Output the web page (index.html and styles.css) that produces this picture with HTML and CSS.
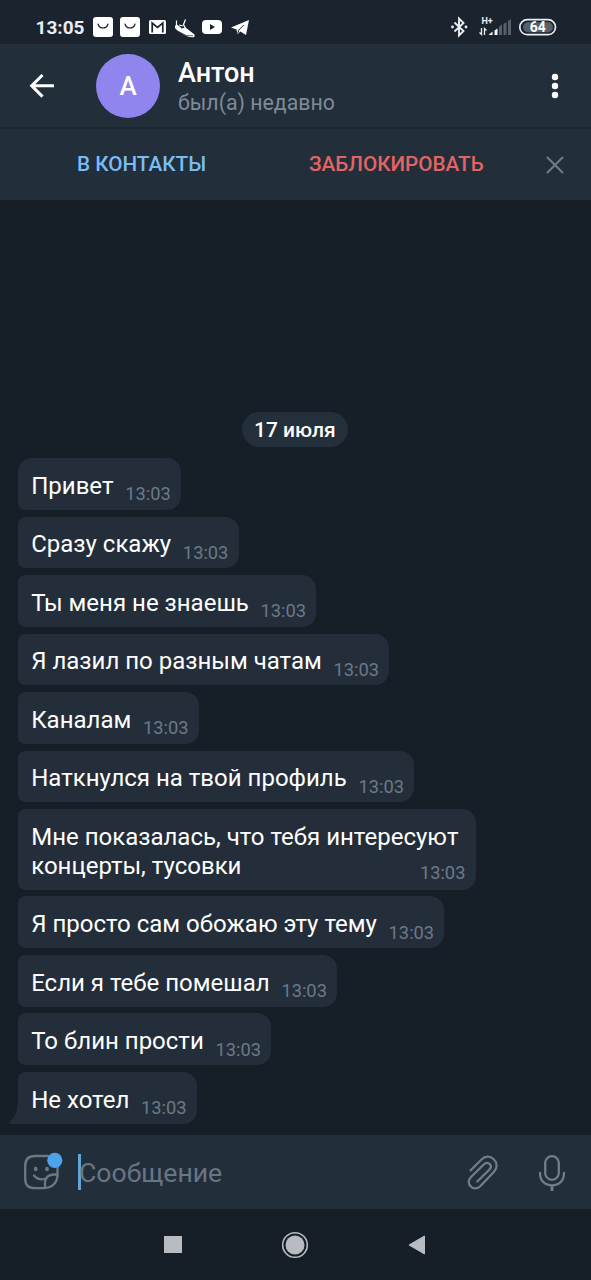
FILE: index.html
```html
<!DOCTYPE html>
<html lang="ru">
<head>
<meta charset="utf-8">
<title>Антон</title>
<link rel="stylesheet" href="styles.css">
</head>
<body>
<div class="phone">
  <div class="status">
    <span class="clock">13:05</span>
    <svg class="notifications" width="160" height="24" viewBox="0 0 160 24">
      <g fill="#fff">
        <rect x="1" y="2" width="20" height="20" rx="3"/>
        <rect x="28" y="2" width="20" height="20" rx="3"/>
        <rect x="57" y="5" width="17" height="14" rx="1.5"/>
        <path d="M83 10.500l2.500-.5 4 3.500 4-1 9 7v2.500q-4 .8-8-1l-9-5-2.500-3z"/>
        <rect x="110" y="5" width="20" height="14" rx="4"/>
        <path d="M139 12.500L157 5L154 20L148.500 16.500L145.500 19L144.500 14.500z"/>
      </g>
      <g fill="none" stroke="#1b242e" stroke-width="1.2">
        <path d="M6 9q1 4 5 4t5-4M33 9q1 4 5 4t5-4" stroke-linecap="round"/>
        <path d="M60.200 17.500V8l5.300 4.500L70.800 8v9.500" stroke-width="1.700"/>
        <path d="M84 15l10 5.500 7 .3" stroke-width=".7"/>
        <path d="M145.800 18l1-3 5-5" stroke-width="1"/>
      </g>
      <path d="M84.500 5.500v5l4 2.500M93.500 4.500l-2 5 2 4M87 10l4 1" fill="none" stroke="#fff" stroke-width="1.200"/>
      <path d="M118 9l5 3-5 3z" fill="#1b242e"/>
    </svg>
    <svg class="signals" width="108" height="24" viewBox="0 0 108 24">
      <path d="M4.500 7.500l9 8.500-4.500 4.500V3.500l4.500 4.500-9 8.500" fill="none" stroke="#e9edf1" stroke-width="1.900"/>
      <circle cx="2.500" cy="12" r="1.400" fill="#e9edf1"/>
      <circle cx="16" cy="12" r="1.400" fill="#e9edf1"/>
      <text class="net" x="31.500" y="9">H+</text>
      <path d="M31.500 13v6.500l-2-2M34.500 20v-6.500l2 2" fill="none" stroke="#e9edf1" stroke-width="1.300"/>
      <path d="M38.500 20l4-3.500v3.500z M44.500 15.500l3-2v6.500h-3z" fill="#fff"/>
      <path d="M49 11.500l3-2v10.500h-3z M53.500 9l3-2v13h-3z M58 6l3-2v16h-3z" fill="#56606a"/>
      <rect x="69.800" y="4.700" width="35.700" height="15" rx="7.500" fill="none" stroke="#e9edf1" stroke-width="1.700"/>
      <path d="M78 7.200h20a5 5 0 010 10H78a5 5 0 010-10z" fill="#56606a"/>
      <text class="battery" x="87.700" y="17">64</text>
    </svg>
  </div>

  <div class="header">
    <svg class="back" width="28" height="28" viewBox="0 0 28 28"><path d="M26 13.800H4M14.500 3L3.700 13.800L14.500 24.600" fill="none" stroke="#fff" stroke-width="3"/></svg>
    <div class="avatar">А</div>
    <div class="who">
      <div class="name">Антон</div>
      <div class="seen">был(а) недавно</div>
    </div>
    <svg class="dots" width="8" height="28" viewBox="0 0 8 28" fill="#fff"><circle cx="4" cy="5" r="3.200"/><circle cx="4" cy="14" r="3.200"/><circle cx="4" cy="23" r="3.200"/></svg>
  </div>

  <div class="actions">
    <span class="add">В КОНТАКТЫ</span>
    <span class="block">ЗАБЛОКИРОВАТЬ</span>
    <svg class="close" width="18" height="18" viewBox="0 0 18 18"><path d="M1.500 1.500l15 15M16.500 1.500l-15 15" stroke="#6f7b88" stroke-width="2.100" stroke-linecap="round"/></svg>
  </div>

  <div class="chat">
    <div class="date">17 июля</div>
    <div class="msg first"><span>Привет</span><time>13:03</time></div>
    <div class="msg"><span>Сразу скажу</span><time>13:03</time></div>
    <div class="msg"><span>Ты меня не знаешь</span><time>13:03</time></div>
    <div class="msg"><span>Я лазил по разным чатам</span><time>13:03</time></div>
    <div class="msg"><span>Каналам</span><time>13:03</time></div>
    <div class="msg"><span>Наткнулся на твой профиль</span><time>13:03</time></div>
    <div class="msg long"><span>Мне показалась, что тебя интересуют<br>концерты, тусовки</span><time>13:03</time></div>
    <div class="msg"><span>Я просто сам обожаю эту тему</span><time>13:03</time></div>
    <div class="msg"><span>Если я тебе помешал</span><time>13:03</time></div>
    <div class="msg"><span>То блин прости</span><time>13:03</time></div>
    <div class="msg last"><span>Не хотел</span><time>13:03</time>
      <svg class="tail" width="10" height="20" viewBox="0 0 10 20"><path d="M10 0H8.500Q8.500 12 .8 17.500Q-.5 19.500 2 20H10z" fill="#232e3a"/></svg>
    </div>
  </div>

  <div class="composer">
    <svg class="sticker" width="40" height="40" viewBox="0 0 40 40">
      <g fill="none" stroke="#6b7987" stroke-width="2.300" stroke-linecap="round">
        <path d="M34.500 15V23Q34 35 21 36.200H12Q2.200 36.200 2.200 27V14Q2.200 4 12 4H25"/>
        <path d="M34.500 22.500H31Q22.500 23 22 30V36"/>
        <path d="M11 23.500Q15 28.500 21.500 27"/>
      </g>
      <ellipse cx="12.700" cy="17" rx="1.900" ry="2.300" fill="#6b7987"/>
      <ellipse cx="24" cy="17" rx="1.900" ry="2.300" fill="#6b7987"/>
      <circle cx="31.800" cy="8.300" r="7.600" fill="#4ba3ea"/>
    </svg>
    <span class="caret"></span>
    <span class="hint">Сообщение</span>
    <svg class="clip" width="32" height="38" viewBox="0 0 32 38"><path d="M3.500 16.500L14.500 5.500C18 2 23 1.700 26.500 5C30.500 9 30.500 14 27 17.800L13.500 32C10.500 35 6.500 35.300 3.800 32.500C1 29.500 1.200 25.800 4 23L17 10.200C18.800 8.400 21.200 8.400 22.700 10C24.300 11.600 24.200 13.800 22.500 15.500L10.300 27.500" fill="none" stroke="#6f7d8c" stroke-width="2.300" stroke-linecap="round"/></svg>
    <svg class="mic" width="28" height="38" viewBox="0 0 28 38" fill="none" stroke="#6f7d8c" stroke-width="2.300"><rect x="7.200" y="2.200" width="13.600" height="23.600" rx="6.800"/><path d="M2 19C2 27 7 31.300 14 31.300S26 27 26 19" stroke-linecap="round"/><path d="M14 31v6" stroke-width="2.800"/></svg>
  </div>

  <div class="nav">
    <svg width="20" height="20" viewBox="0 0 20 20"><path d="M1 1h18v17H1z" fill="#b8bcc0"/></svg>
    <svg width="28" height="28" viewBox="0 0 28 28"><circle cx="14" cy="14" r="12.300" fill="none" stroke="#b8bcc0" stroke-width="1.600"/><circle cx="14" cy="14" r="9.500" fill="#b8bcc0"/></svg>
    <svg width="20" height="22" viewBox="0 0 20 22"><path d="M2 11L17.500 2v18z" fill="#b8bcc0" stroke="#b8bcc0" stroke-linejoin="round"/></svg>
  </div>
</div>
</body>
</html>
```
FILE: styles.css
```css
body {
  margin: 0;
  background: #161e27;
  font-family: Roboto, "Noto Sans", sans-serif;
  color: #fff;
}

.phone {
  width: 591px;
  height: 1280px;
  display: flex;
  flex-direction: column;
  overflow: hidden;
}

.phone svg {
  display: block;
  flex: none;
}

.status {
  height: 44px;
  box-sizing: border-box;
  padding: 10px 33.5px 0 35.5px;
  display: flex;
  align-items: center;
  background: #1b242e;
}

.clock {
  width: 56.5px;
  font-size: 19px;
  font-weight: 700;
  color: #e9edf1;
}

.signals {
  margin-left: auto;
}

.net {
  font-size: 9px;
  font-weight: 700;
  fill: #e9edf1;
}

.battery {
  font-size: 14px;
  font-weight: 700;
  fill: #fff;
  text-anchor: middle;
}

.header {
  height: 85px;
  box-sizing: border-box;
  padding: 0 32px 0 28px;
  display: flex;
  align-items: center;
  background: #232e3b;
  border-bottom: 2px solid #1e2833;
}

.avatar {
  width: 64px;
  height: 64px;
  margin: 0 18px 0 40px;
  border-radius: 50%;
  background: #9085ee;
  font-size: 26px;
  font-weight: 500;
  line-height: 64px;
  text-align: center;
}

.who {
  flex: 1;
  padding-top: 5px;
}

.name {
  font-size: 27px;
  font-weight: 500;
  line-height: 30px;
}

.seen {
  font-size: 21.3px;
  line-height: 30px;
  color: #7d8b99;
}

.actions {
  height: 71px;
  display: flex;
  align-items: center;
  background: #232e3b;
  font-size: 20.7px;
  font-weight: 500;
}

.add {
  width: 232px;
  padding: 0 0 2px 77px;
  box-sizing: border-box;
  color: #78bdf3;
}

.block {
  padding: 0 0 2px 77px;
  color: #e36464;
}

.close {
  margin: 1px 27px 0 auto;
}

.chat {
  flex: 1;
  padding: 0 0 11.5px 17.5px;
  display: flex;
  flex-direction: column;
  justify-content: flex-end;
  align-items: flex-start;
  gap: 6.8px;
}

.date {
  height: 35px;
  box-sizing: border-box;
  margin: 0 0 4px 224.5px;
  padding: 1px 12px 0;
  border-radius: 18px;
  background: #232f3a;
  font-size: 21px;
  font-weight: 500;
  line-height: 35px;
}

.msg {
  position: relative;
  height: 51.7px;
  box-sizing: border-box;
  padding: 13.7px 10.3px 0 13.7px;
  display: flex;
  gap: 11.7px;
  border-radius: 7px 14px 14px 7px;
  background: #232e3a;
  font-size: 24px;
  line-height: 29.2px;
  white-space: nowrap;
}

.msg time {
  padding-top: 7.6px;
  font-size: 18.3px;
  line-height: 29px;
  color: #6c7986;
}

.first {
  border-top-left-radius: 14px;
}

.long {
  width: 458.5px;
  height: 80.5px;
}

.long span {
  width: 377px;
}

.long time {
  padding-top: 35.6px;
}

.last {
  border-bottom-left-radius: 0;
}

.tail {
  position: absolute;
  left: -9px;
  bottom: 0;
}

.composer {
  height: 74px;
  display: flex;
  align-items: center;
  background: #232e3b;
}

.sticker {
  margin: 0 15px 0 23px;
}

.caret {
  width: 3px;
  height: 36px;
  background: #5fa6df;
}

.hint {
  margin-left: -2px;
  font-size: 26.6px;
  color: #687584;
}

.clip {
  margin: 2px 0 0 auto;
}

.mic {
  margin: 1px 25.5px 0 38.5px;
}

.nav {
  height: 71px;
  box-sizing: border-box;
  padding-right: 2px;
  display: flex;
  align-items: center;
  justify-content: center;
  gap: 98px;
}
```
